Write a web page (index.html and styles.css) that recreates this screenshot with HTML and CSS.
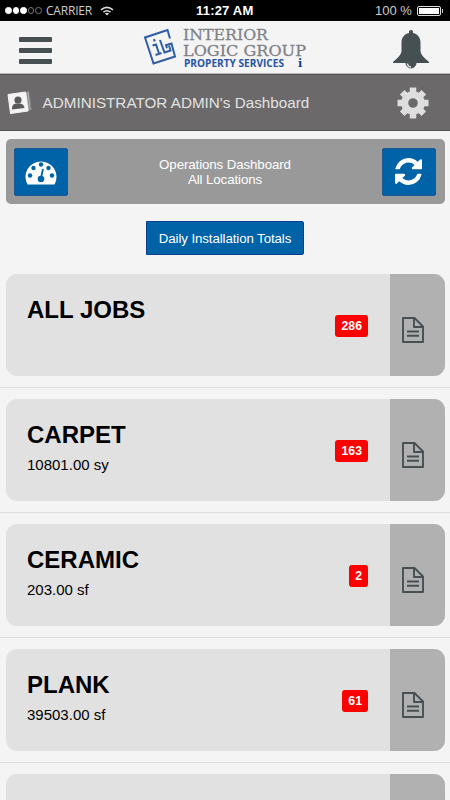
FILE: index.html
```html
<!DOCTYPE html>
<html lang="en">
<head>
  <meta charset="UTF-8">
  <meta name="viewport" content="width=device-width, initial-scale=1.0">
  <title>Operations Dashboard</title>
  <link rel="stylesheet" href="styles.css">
</head>
<body>
  <svg class="defs" width="0" height="0">
    <symbol id="file" viewBox="0 0 22 26">
      <path d="M1 1h11.500L21 9.500V25H1z M12 1v9h9 M5 14.500h12 M5 18.700h12" fill="none" stroke="#465053" stroke-width="1.900" stroke-linejoin="round"/>
    </symbol>
  </svg>

  <div class="status-bar">
    <div class="signal"><i class="on"></i><i class="on"></i><i class="on"></i><i></i><i></i></div>
    <span class="carrier">CARRIER</span>
    <svg class="wifi" viewBox="0 0 14 10" fill="none" stroke="#ddd" stroke-width="1.600">
      <path d="M1 3.800Q7-1 13 3.800M3.400 6.200Q7 3.300 10.600 6.200"/>
      <path d="M4.900 7.400L7 9.600 9.100 7.400Q7 6 4.900 7.400z" fill="#ddd" stroke="none"/>
    </svg>
    <span class="time">11:27 AM</span>
    <span class="percent">100 %</span>
    <span class="battery"><i></i></span>
  </div>

  <header class="header">
    <div class="menu"><span></span><span></span><span></span></div>
    <svg class="logo" viewBox="0 0 166 44">
      <g fill="none" stroke="#2f5ea8" stroke-width="2">
        <path d="M27 12.500l-2.500-8.500L2 11.500 10.500 37.500 32 30.500 28.500 17.500l-5.500 1.700 1 3"/>
        <path d="M9.500 19.500l3.500-1 3 9M12.500 29l6-2M17 14l4.500 12.500 6-2-1.500-5"/>
        <path d="M10.300 14.600l2-.6" stroke-width="2.500"/>
      </g>
      <g class="logo-serif">
        <text x="40" y="14" textLength="85" lengthAdjust="spacingAndGlyphs">INTERIOR</text>
        <text x="40" y="29.500" textLength="123" lengthAdjust="spacingAndGlyphs">LOGIC GROUP</text>
      </g>
      <text class="logo-sub" x="41" y="40.500" textLength="100" lengthAdjust="spacingAndGlyphs">PROPERTY SERVICES</text>
      <text class="logo-info" x="155" y="40.500">i</text>
    </svg>
    <svg class="bell" viewBox="0 0 36 40">
      <path d="M18 0c1.600 0 2.300 1.200 2 3 5 1 7.500 5 7.500 9.500v8c0 4 3 6.500 8.500 11.500v1H0v-1c5.500-5 8.500-7.500 8.500-11.500v-8C8.500 8 11 4 16 3c-.3-1.800.4-3 2-3z" fill="#465053"/>
      <path d="M13 33a5 5 0 0 0 10 0z" fill="#465053" stroke="#465053"/>
      <path d="M14.500 33.500a3.500 3.500 0 0 0 3.500 3.500" fill="none" stroke="#ddd" stroke-width="1.500"/>
    </svg>
  </header>

  <div class="title-bar">
    <svg class="contact" viewBox="0 0 26 24">
      <path d="M18 1.500l4-1 2.500 18-5 2z" fill="#bdbdbd"/>
      <path d="M20 1l2.500 18.500M22 1l2 18" stroke="#6b696a" stroke-width=".7"/>
      <path d="M1 3.500L18.500 1l2.500 19L3.500 22.500z" fill="#f4f4f4" stroke="#f4f4f4" stroke-linejoin="round"/>
      <circle cx="11" cy="9" r="3.600" fill="#5c5a5b"/>
      <path d="M5 18.500c-.3-4 1.500-5.500 4-6h4c3 .2 4 2 4.500 4.500z" fill="#5c5a5b"/>
    </svg>
    <h1>ADMINISTRATOR ADMIN's Dashboard</h1>
    <svg class="gear" viewBox="-16 -16 32 32">
      <g fill="none" stroke="#dedede">
        <circle r="8.300" stroke-width="7"/>
        <path d="M0-15.500v6M0 9.500v6M-15.500 0h6M9.500 0h6M-10.800-10.800l4 4M6.800 6.800l4 4M10.800-10.800l-4 4M-6.800 6.800l-4 4" stroke-width="6.500"/>
      </g>
    </svg>
  </div>

  <main>
    <section class="panel">
      <div class="btn-icon">
        <svg width="32" height="26" viewBox="0 0 32 26">
          <path d="M2.500 25.500A15.500 15.500 0 1 1 29.500 25.500z" fill="#fff"/>
          <g fill="#0062a7">
            <circle cx="5" cy="16.500" r="2.200"/><circle cx="8.500" cy="9" r="2.200"/><circle cx="16" cy="5.500" r="2.200"/>
            <circle cx="23.500" cy="9" r="2.200"/><circle cx="27" cy="16.500" r="2.200"/><circle cx="16" cy="20" r="3.300"/>
          </g>
          <path d="M16 19l2-9" stroke="#0062a7" stroke-width="1.800"/>
        </svg>
      </div>
      <p>Operations Dashboard<br>All Locations</p>
      <div class="btn-icon">
        <svg width="27" height="27" viewBox="0 0 1536 1536">
          <path fill="#fff" d="M1511 928q0 5-1 7-64 268-268 434.500t-478 166.500q-146 0-282.500-55t-243.500-157l-129 129q-19 19-45 19t-45-19-19-45v-448q0-26 19-45t45-19h448q26 0 45 19t19 45-19 45l-137 137q71 66 161 102t187 36q134 0 250-65t186-179q11-17 53-117 8-23 30-23h192q13 0 22.500 9.500t9.500 22.500zm25-800v448q0 26-19 45t-45 19h-448q-26 0-45-19t-19-45 19-45l138-138q-148-137-349-137-134 0-250 65t-186 179q-11 17-53 117-8 23-30 23h-199q-13 0-22.500-9.500t-9.500-22.500v-7q65-268 270-434.500t480-166.500q146 0 284 55.500t245 156.500l130-129q19-19 45-19t45 19 19 45z"/>
        </svg>
      </div>
    </section>

    <button class="totals">Daily Installation Totals</button>

    <ul class="jobs">
      <li>
        <div class="card">
          <div class="info"><h2>ALL JOBS</h2></div>
          <span class="badge">286</span>
          <div class="open"><svg><use href="#file"/></svg></div>
        </div>
      </li>
      <li>
        <div class="card">
          <div class="info"><h2>CARPET</h2><p>10801.00 sy</p></div>
          <span class="badge">163</span>
          <div class="open"><svg><use href="#file"/></svg></div>
        </div>
      </li>
      <li>
        <div class="card">
          <div class="info"><h2>CERAMIC</h2><p>203.00 sf</p></div>
          <span class="badge">2</span>
          <div class="open"><svg><use href="#file"/></svg></div>
        </div>
      </li>
      <li>
        <div class="card">
          <div class="info"><h2>PLANK</h2><p>39503.00 sf</p></div>
          <span class="badge">61</span>
          <div class="open"><svg><use href="#file"/></svg></div>
        </div>
      </li>
      <li class="cut">
        <div class="card">
          <div class="info"></div>
          <div class="open"></div>
        </div>
      </li>
    </ul>
  </main>
</body>
</html>
```
FILE: styles.css
```css
* { margin:0; padding:0; box-sizing:border-box; }
body {
  height:800px;
  overflow:hidden;
  background:#f4f4f4;
  color:#000;
  font-family:"Liberation Sans", Arial, sans-serif;
}
.defs { display:block; }

/* status bar */
.status-bar {
  display:flex; align-items:center;
  height:21px; padding:0 7px 0 5px;
  background:#000; color:#fff;
}
.signal { display:flex; gap:1px; width:41px; }
.signal i { width:6.500px; height:6.500px; border:1px solid #777; border-radius:50%; }
.signal .on { background:#fff; border-color:#fff; }
.carrier { width:54px; font:12px/23px "Open Sans", sans-serif; letter-spacing:-0.2px; color:#ccc; }
.wifi { width:14px; height:10px; }
.time { width:64px; margin-left:82px; font-size:13px; font-weight:bold; letter-spacing:0.2px; white-space:nowrap; }
.percent { width:42px; margin-left:auto; font-size:13px; color:#ccc; white-space:nowrap; }
.battery {
  position:relative;
  width:24px; height:10px; padding:1px; margin-right:2px;
  border:1px solid #ddd; border-radius:2px;
}
.battery i { display:block; height:100%; background:#fff; }
.battery::after { content:''; position:absolute; top:2px; right:-3px; width:1.500px; height:4px; background:#ccc; }

/* header */
.header {
  display:flex; align-items:flex-start;
  height:53px; padding:0 21px 0 19px;
  border-bottom:1px solid #bbb;
}
.menu { width:33px; padding-top:16px; }
.menu span { display:block; height:5px; margin-bottom:6px; border-radius:1px; background:#465053; }
.logo { width:166px; height:44px; margin:5px 0 0 91px; }
.logo-serif { font:15.500px "DejaVu Serif", serif; fill:#808287; stroke:#808287; stroke-width:.3px; }
.logo-sub { font:bold 10px "Open Sans", sans-serif; fill:#2754a3; }
.logo-info { font:bold 11px "DejaVu Serif", serif; fill:#0b3b9b; }
.bell { width:36px; height:40px; margin:9px 0 0 auto; }

/* page title */
.title-bar {
  display:flex; align-items:center;
  height:57px; padding:0 21px 0 7px;
  background:#6b696a;
  border-top:1px solid #535152;
  border-bottom:1px solid #535152;
}
.contact { width:26px; height:24px; }
.title-bar h1 { margin-left:9.500px; font-size:15.250px; font-weight:normal; color:#e2e2e2; white-space:nowrap; }
.gear { width:32px; height:32px; margin-left:auto; }

/* operations panel */
main { display:flex; flex-direction:column; align-items:center; height:669px; overflow:hidden; }
.panel {
  display:flex; flex-shrink:0; align-items:center; justify-content:space-between;
  width:439px; height:65px; margin-top:8px; padding:0 8.500px;
  border-radius:5px; background:#999;
}
.panel p { font-size:13.300px; line-height:15px; letter-spacing:-0.1px; text-align:center; color:#fff; }
.btn-icon {
  display:flex; align-items:center; justify-content:center;
  width:54px; height:48px; border-radius:2px;
  background:#0062a7; border:1px solid #1d5691;
}
.totals {
  flex-shrink:0;
  width:158px; height:34px; margin-top:17px;
  border:1px solid #0a3d8c; border-radius:0 2px 2px 0;
  background:#0062a7; color:#fff;
  font:13.300px "Liberation Sans", Arial, sans-serif; letter-spacing:-0.1px; white-space:nowrap;
}

/* job list */
.jobs { flex-shrink:0; width:100%; margin-top:8px; list-style:none; }
.jobs li { height:125px; padding:10.500px 5.500px 0; border-bottom:1px solid #dedede; }
.card {
  display:flex; align-items:center;
  height:102px; border-radius:11px;
  background:#e1e1e1; overflow:hidden;
}
/* the last row only peeks in at the bottom of the screen */
.jobs .cut { height:37px; border-bottom:0; }
.cut .card { height:26.500px; border-radius:11px 11px 0 0; }
.info { flex:1; align-self:flex-start; padding:22px 0 0 21.500px; }
.info h2 { font-size:24px; line-height:27px; }
.info p { margin-top:8px; font-size:15px; line-height:17px; }
.badge {
  height:22px; padding:0 6px; margin:3px 22px 0 0;
  border-radius:3px; background:#f00; color:#fff;
  font-size:12.300px; font-weight:bold; line-height:22px;
}
.open {
  display:flex; align-items:center; align-self:stretch;
  width:54.500px; padding:11px 0 0 12px; background:#b1b1b1;
}
.open svg { width:22px; height:26px; }
```
